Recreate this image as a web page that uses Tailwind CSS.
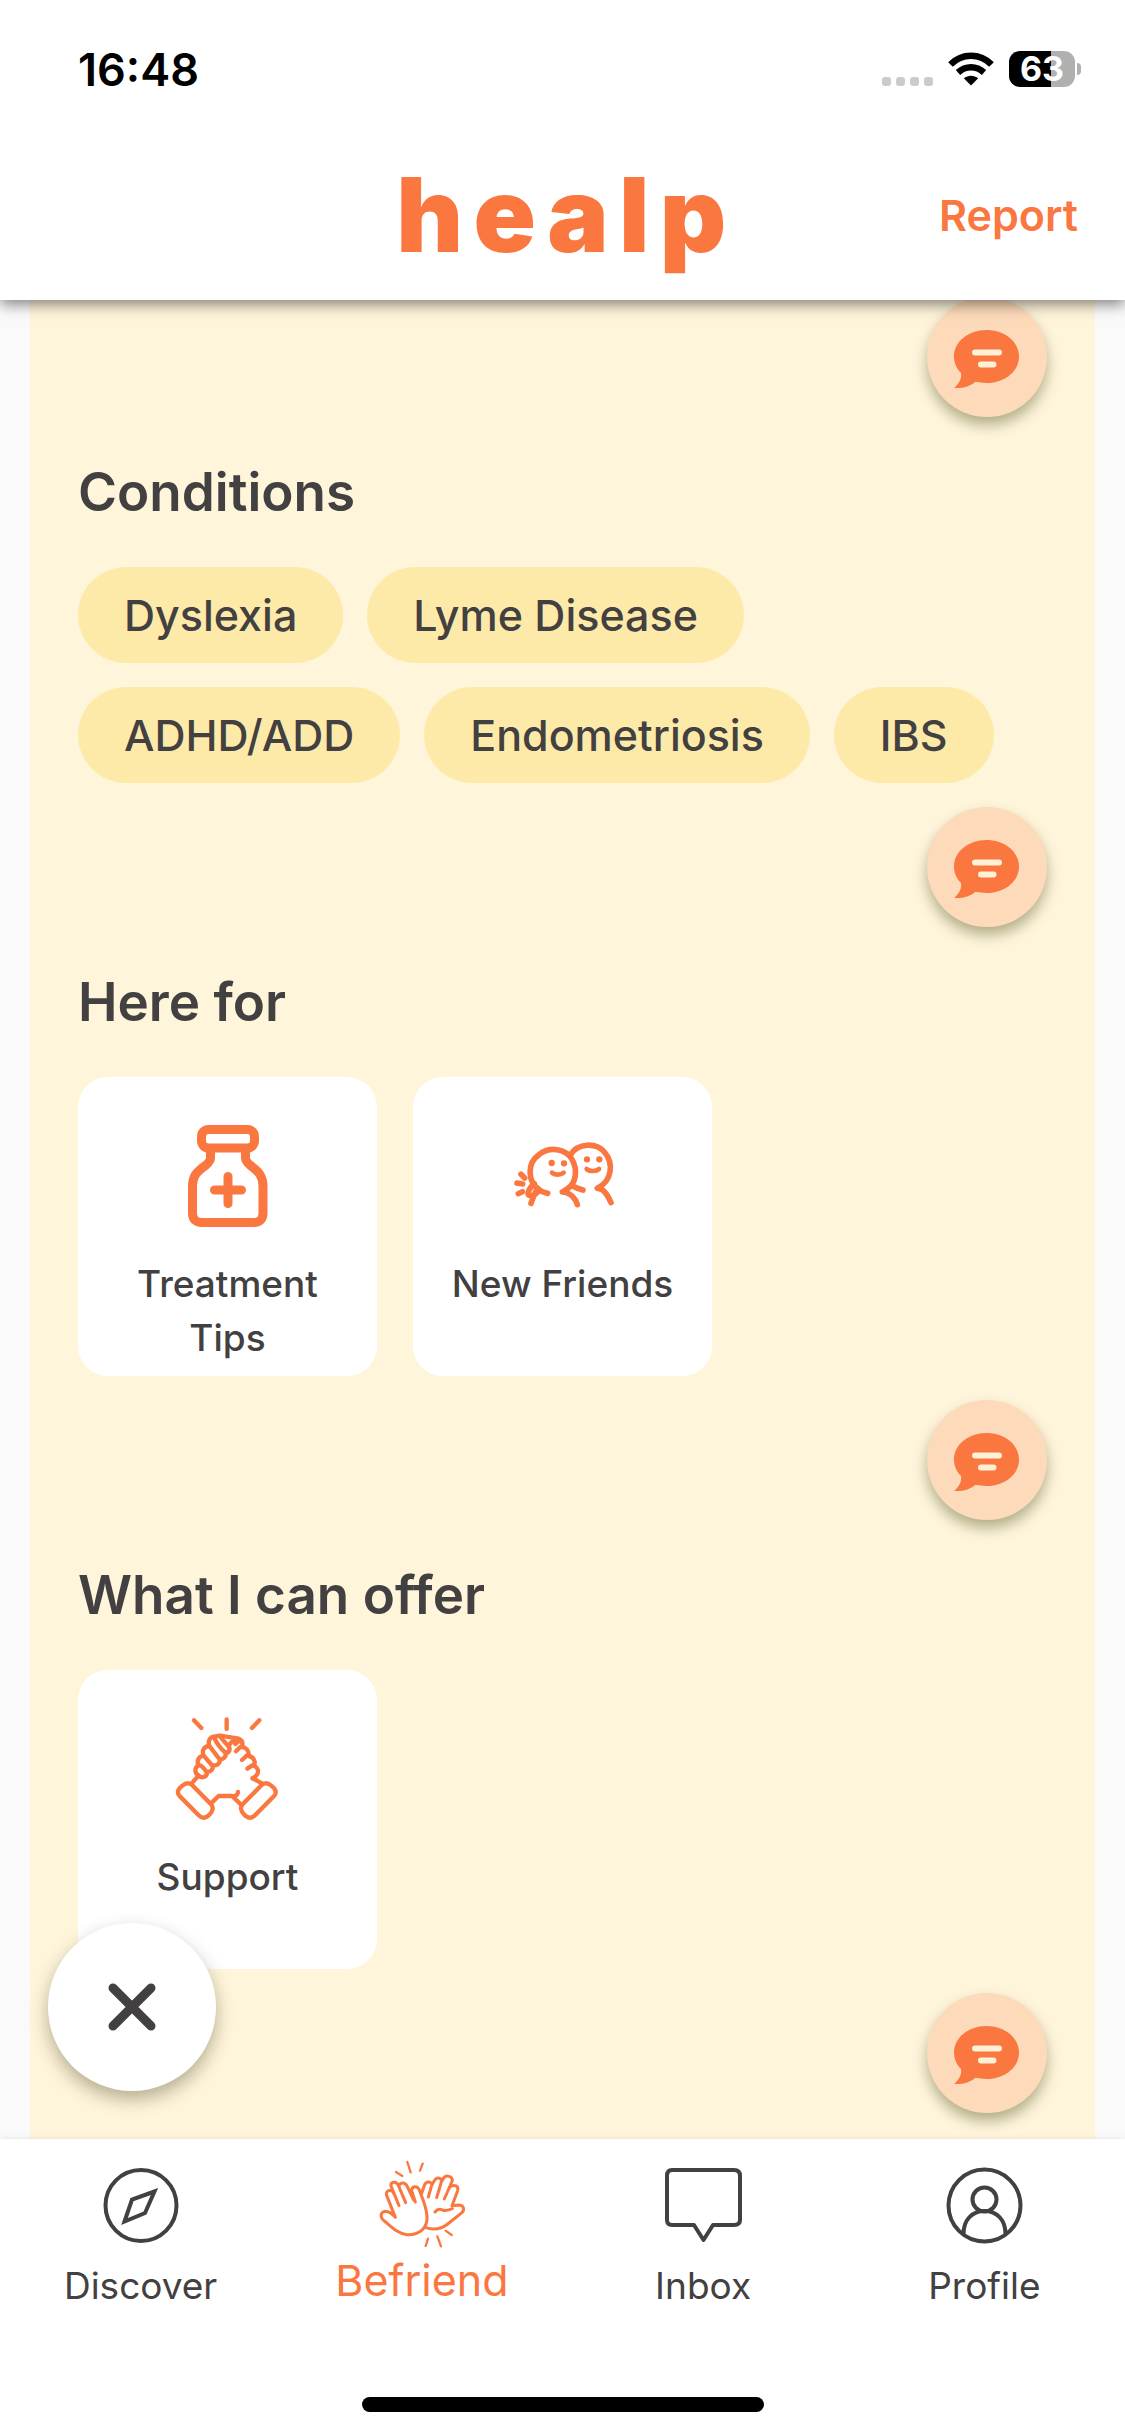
<!DOCTYPE html>
<html lang="en">
<head>
<meta charset="utf-8">
<meta name="viewport" content="width=device-width, initial-scale=1">
<title>healp</title>
<script src="https://cdn.jsdelivr.net/npm/@tailwindcss/browser@4"></script>
</head>
<body class="flex min-h-screen flex-col bg-[#fafafa] font-[Inter,sans-serif] text-[#424040]">

<svg class="hidden" aria-hidden="true">
  <symbol id="chat" viewBox="0 0 120 120">
    <path fill="#fa773f" d="M59.500 33C77.500 33 92 44.500 92 59.500S77.500 86 59.500 86C55.500 86 52 85.500 48.500 84.800C43 89.500 36 91.500 27 91C31.500 87.500 35 82 34 76C29.500 71.500 27 66 27 59.500C27 44.500 41.500 33 59.500 33Z"/>
    <path stroke="#fff0d8" stroke-width="6" stroke-linecap="round" d="M48 55.500H72M54 67.500H66.500"/>
  </symbol>
</svg>

<header class="sticky top-0 z-20 bg-white shadow-[0_4px_14px_rgba(0,0,0,0.5)]">
  <div class="flex h-[138px] items-center justify-between pr-11 pl-[78px]">
    <time class="text-[45px] leading-none font-semibold text-black">16:48</time>
    <div class="flex items-center gap-[15px]">
      <div class="flex gap-[5px] pt-6">
        <span class="size-[9px] rounded-[3px] bg-[#cbcbcb]"></span>
        <span class="size-[9px] rounded-[3px] bg-[#cbcbcb]"></span>
        <span class="size-[9px] rounded-[3px] bg-[#cbcbcb]"></span>
        <span class="size-[9px] rounded-[3px] bg-[#cbcbcb]"></span>
      </div>
      <svg class="h-[34px] w-[46px]" viewBox="0 0 46 34" fill="none" stroke="#000" stroke-width="6.500" role="img" aria-label="Wi-Fi">
        <path d="M2.500 12.500C14 .8 32 .8 43.500 12.500"/>
        <path d="M10 20.500C17.500 13.500 28.500 13.500 36 20.500"/>
        <path fill="#000" stroke="none" d="M23 33.500L15.800 26.200C20 22.800 26 22.800 30.200 26.200Z"/>
      </svg>
      <div class="flex items-center gap-0.5">
        <span class="flex h-9 w-[66px] items-center justify-center rounded-[11px] bg-linear-to-r from-black from-63% to-[#b0b0b0] to-63% text-[34px] leading-none font-bold text-white">63</span>
        <span class="h-3 w-1 rounded-r-full bg-[#b0b0b0]"></span>
      </div>
    </div>
  </div>
  <div class="grid h-[162px] grid-cols-[1fr_auto_1fr] items-start px-[47px]">
    <h1 class="col-start-2 pt-[27px] pl-2 text-[103px] leading-[100px] font-black tracking-widest text-[#fa773f]">healp</h1>
    <button type="button" class="justify-self-end pt-[50px] text-[43px] leading-[54px] font-semibold text-[#fa773f]">Report</button>
  </div>
</header>

<main class="mx-[30px] flex-1 overflow-hidden bg-[#fff5db] pr-12 pb-[26px] pl-12">
  <div class="-mt-[3px] flex justify-end">
    <button type="button" aria-label="Comment on profile" class="size-[120px] rounded-full bg-[#fddab9] shadow-[0_8px_14px_rgba(60,70,20,0.4)]"><svg class="size-full"><use href="#chat"/></svg></button>
  </div>

  <section class="pt-9">
    <h2 class="text-[53px] leading-[78px] font-semibold">Conditions</h2>
    <ul class="flex flex-wrap gap-6 pt-9 text-[43px] leading-[96px] font-medium">
      <li class="rounded-full bg-[#feeaa8] px-[46px]">Dyslexia</li>
      <li class="rounded-full bg-[#feeaa8] px-[46px]">Lyme Disease</li>
      <li class="rounded-full bg-[#feeaa8] px-[46px]">ADHD/ADD</li>
      <li class="rounded-full bg-[#feeaa8] px-[46px]">Endometriosis</li>
      <li class="rounded-full bg-[#feeaa8] px-[46px]">IBS</li>
    </ul>
    <div class="flex justify-end pt-6">
      <button type="button" aria-label="Comment on conditions" class="size-[120px] rounded-full bg-[#fddab9] shadow-[0_8px_14px_rgba(60,70,20,0.4)]"><svg class="size-full"><use href="#chat"/></svg></button>
    </div>
  </section>

  <section class="pt-9">
    <h2 class="text-[53px] leading-[78px] font-semibold">Here for</h2>
    <ul class="flex flex-wrap gap-9 pt-9 text-center text-[37px] leading-[54px] font-medium">
      <li class="flex h-[299px] w-[299px] flex-col items-center gap-[27px] rounded-[30px] bg-white px-6 pt-[45px]">
        <svg class="size-[108px] shrink-0" viewBox="0 0 108 108" fill="none" stroke="#fa773f" stroke-width="9" stroke-linecap="round" stroke-linejoin="round">
          <rect x="27.500" y="7.500" width="53" height="18.500" rx="7"/>
          <path d="M36.500 27V36c0 3-2 5-5 7.500C22 50 18.500 55 18.500 64V91q0 9.500 9.500 9.500h51.500q9.500 0 9.500-9.500V64c0-9-3.500-14-12.500-20.500-3-2.500-5-4.500-5-7.500V27M54 54.500V81.500M40.500 68H67.500"/>
        </svg>
        <span>Treatment<br>Tips</span>
      </li>
      <li class="flex h-[299px] w-[299px] flex-col items-center gap-[27px] rounded-[30px] bg-white px-6 pt-[45px]">
        <svg class="size-[108px] shrink-0" viewBox="56 6 324 324" fill="none" stroke="#fa773f" stroke-width="17" stroke-linecap="round" stroke-linejoin="round">
          <path d="M146 208C113 188 108 130 146 104C178 78 226 86 245 118C263 150 256 184 238 201C230 208 222 213 216 216C240 216 257 238 261 254"/>
          <path d="M240 105C262 68 318 66 344 98C370 130 366 182 321 205C343 203 356 234 362 248"/>
          <path d="M245 197C256 204 266 207 278 210M172 220C160 218 148 211 140 208C130 224 126 240 122 250M132 191C120 200 108 220 116 226C128 230 142 220 144 212"/>
          <path d="M92 163L103 174M80 189L97 192M84 221L96 215"/>
          <path stroke-width="14" d="M185 158C194 166 212 166 220 158M289 147C298 156 319 154 326 147"/>
          <path stroke-width="19" d="M184 129h.1M221 130h.1M290 118h.1M327 118h.1"/>
        </svg>
        <span>New Friends</span>
      </li>
    </ul>
    <div class="flex justify-end pt-6">
      <button type="button" aria-label="Comment on here for" class="size-[120px] rounded-full bg-[#fddab9] shadow-[0_8px_14px_rgba(60,70,20,0.4)]"><svg class="size-full"><use href="#chat"/></svg></button>
    </div>
  </section>

  <section class="pt-9">
    <h2 class="text-[53px] leading-[78px] font-semibold">What I can offer</h2>
    <ul class="flex flex-wrap gap-9 pt-9 text-center text-[37px] leading-[54px] font-medium">
      <li class="flex h-[299px] w-[299px] flex-col items-center gap-[27px] rounded-[30px] bg-white px-6 pt-[45px]">
        <svg class="size-[108px] shrink-0" viewBox="42 45 324 324" fill="none" stroke="#fa773f" stroke-width="13" stroke-linecap="round" stroke-linejoin="round">
          <path d="M102 61L124 84M200 58V87M298 61L276 84"/>
          <path d="M58 287C50 278 54 266 66 258C78 247 88 247 97 256L153 313C162 322 158 334 148 344C136 356 126 356 116 346Z"/>
          <path d="M343 287C351 278 347 266 335 258C323 247 313 247 304 256L248 313C239 322 243 334 253 344C265 356 275 356 285 346Z"/>
          <path d="M95 250L113 230M306 250L278 235M156 307L176 288H216L243 314M218 290C228 288 234 284 234 276"/>
          <path d="M116 227C104 220 102 204 115 196C109 180 118 168 131 167C124 150 134 138 148 138C142 120 152 108 168 109C176 105 186 107 194 109L236 116C246 120 249 130 246 141C260 143 268 154 266 168C280 170 288 184 282 197C294 203 298 216 290 225C287 230 282 232 278 235"/>
          <path d="M116 227C122 234 136 234 141 222C139 210 122 192 115 196M141 215C152 216 160 208 158 198L131 167M158 196C170 198 182 190 179 178L148 138M180 178C192 178 200 168 196 158C184 148 166 126 163 111M196 160C208 158 212 148 206 140L182 112M206 138C210 128 222 118 234 118"/>
          <path d="M228 154L240 142M246 180L260 167M262 206L277 196M236 124L226 132"/>
        </svg>
        <span>Support</span>
      </li>
    </ul>
    <div class="flex justify-end pt-6">
      <button type="button" aria-label="Comment on what I can offer" class="size-[120px] rounded-full bg-[#fddab9] shadow-[0_8px_14px_rgba(60,70,20,0.4)]"><svg class="size-full"><use href="#chat"/></svg></button>
    </div>
  </section>
</main>

<footer class="sticky bottom-0 z-10 bg-white shadow-[0_0_6px_rgba(0,0,0,0.1)]">
  <button type="button" aria-label="Dismiss" class="absolute bottom-full left-12 mb-12 flex size-[168px] items-center justify-center rounded-full bg-white shadow-[0_8px_18px_rgba(40,40,10,0.35)]">
    <svg class="size-12" viewBox="0 0 48 48" stroke="#424040" stroke-width="9" stroke-linecap="round"><path d="M5 5L43 43M43 5L5 43"/></svg>
  </button>
  <nav class="grid grid-cols-4 pt-[21px] text-center text-[37px] leading-[54px]">
    <a href="#discover" class="flex h-[165px] flex-col items-center gap-[9px]">
      <svg class="size-[90px]" viewBox="0 0 90 90" fill="none" stroke="#424040" stroke-width="4">
        <circle cx="45" cy="45.500" r="35.500"/>
        <path d="M58.500 31.500L36 39.500L28.500 61.500L49 53Z"/>
      </svg>
      <span>Discover</span>
    </a>
    <a href="#befriend" aria-current="page" class="flex h-[165px] flex-col items-center gap-[9px] text-[43px] leading-[42px] text-[#fa773f]">
      <svg class="size-[90px]" viewBox="50 30 270 270" fill="none" stroke="#fa773f" stroke-width="9" stroke-linecap="round" stroke-linejoin="round">
        <path stroke-width="7" d="M141 36L151 67M187 41L179 62M107 66L126 78M203 266L196 288M231 259L242 289M256 242L274 255"/>
        <path d="M116 167L92 108C90 96 106 92 113 104L136 158M101 132C96 116 76 120 78 134L105 202C94 190 80 180 68 186C58 193 62 206 72 213C96 234 112 250 140 254C172 256 196 240 200 210C202 186 194 166 186 144L176 118C170 106 154 108 154 122L165 156M116 110C118 96 134 96 140 108L160 150"/>
        <path d="M184 130L193 104C198 92 216 94 214 106L204 141M214 106L222 92C230 78 246 84 243 96L229 143M242 98L250 84C258 74 276 78 276 92L252 147M270 110C282 102 296 108 292 122L275 167L296 165C312 166 314 182 302 190L262 222C242 238 216 240 194 232M224 186C230 178 238 176 246 180C258 184 264 180 276 176"/>
      </svg>
      <span>Befriend</span>
    </a>
    <a href="#inbox" class="flex h-[165px] flex-col items-center gap-[9px]">
      <svg class="size-[90px]" viewBox="0 0 90 90" fill="none" stroke="#424040" stroke-width="4" stroke-linejoin="round">
        <path d="M14 10H76q6 0 6 6V60q0 5-6 5H55L45.500 80L36 65H14q-5 0-5-5V16q0-6 5-6Z"/>
      </svg>
      <span>Inbox</span>
    </a>
    <a href="#profile" class="flex h-[165px] flex-col items-center gap-[9px]">
      <svg class="size-[90px]" viewBox="0 0 90 90" fill="none" stroke="#424040" stroke-width="4">
        <circle cx="45.500" cy="45.500" r="36"/>
        <circle cx="45.500" cy="39.500" r="12"/>
        <path d="M24.500 74C24.500 60 33 51 45.500 51S66.500 60 66.500 74"/>
      </svg>
      <span>Profile</span>
    </a>
  </nav>
  <div class="flex h-[111px] items-end justify-center pb-6">
    <span class="h-[15px] w-[402px] rounded-full bg-black"></span>
  </div>
</footer>
</body>
</html>
